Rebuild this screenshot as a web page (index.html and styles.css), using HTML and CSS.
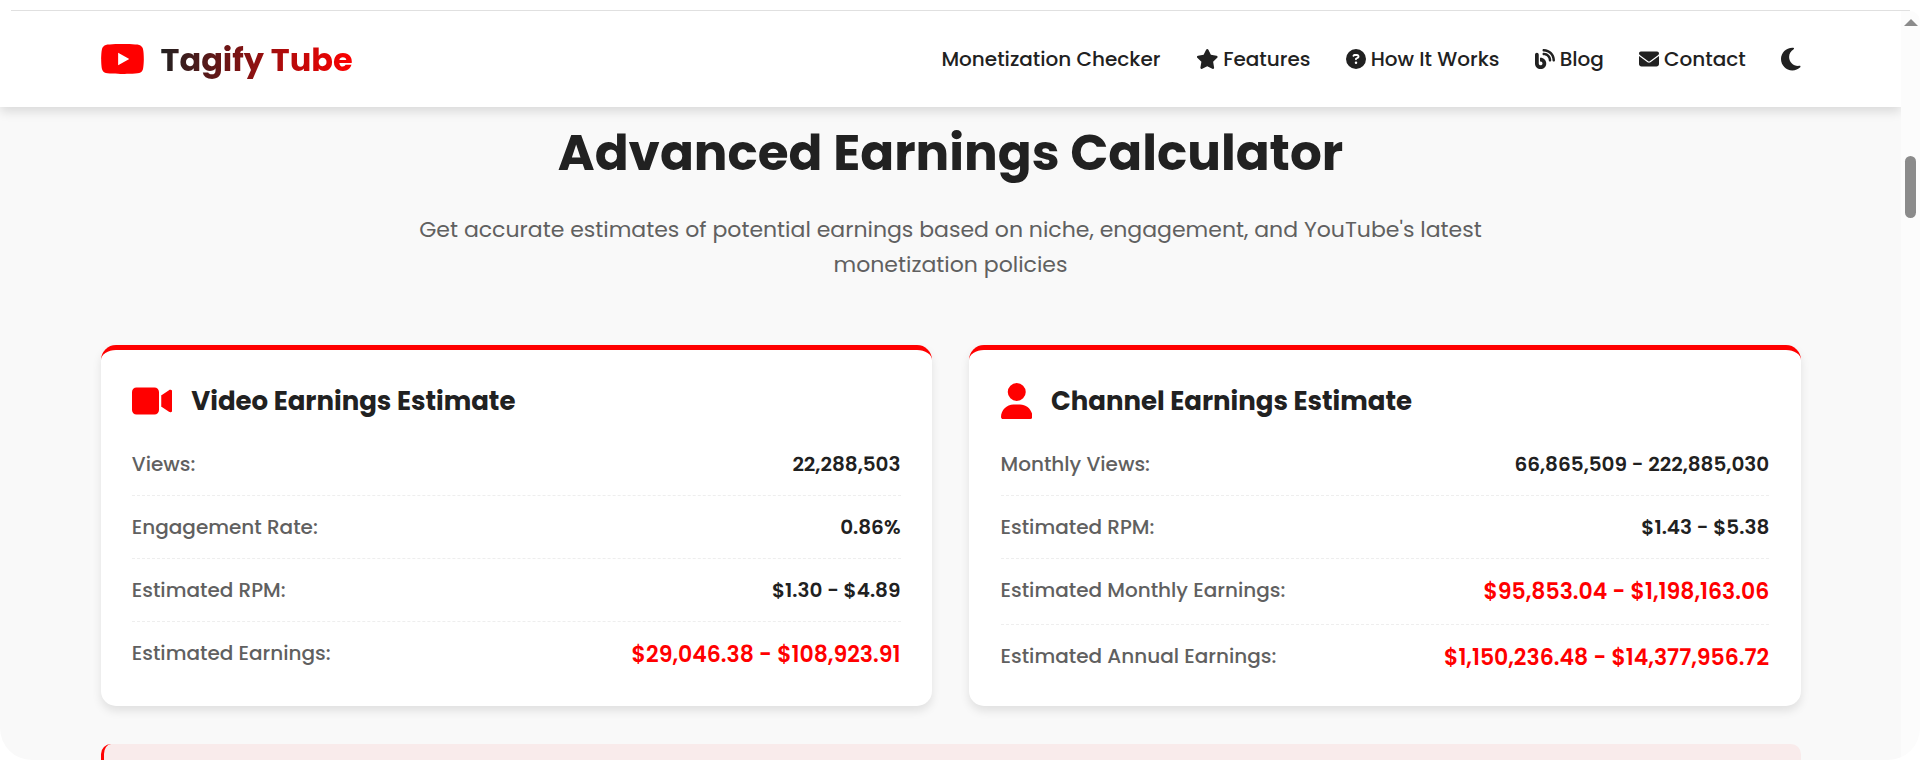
FILE: index.html
```html
<!DOCTYPE html>
<html lang="en">
<head>
    <meta charset="UTF-8">
    <meta name="viewport" content="width=device-width, initial-scale=1.0">
    <title>Tagify Tube</title>
    <link rel="stylesheet" href="styles.css">
</head>
<body>
    <div class="top-line"></div>
    <div class="window">
        <div class="page">
            <header>
                <a href="#" class="logo">
                    <svg class="logo-icon" viewBox="0 0 576 512"><path d="M549.655 124.083c-6.281-23.65-24.787-42.276-48.284-48.597C458.781 64 288 64 288 64S117.22 64 74.629 75.486c-23.497 6.322-42.003 24.947-48.284 48.597-11.412 42.867-11.412 132.305-11.412 132.305s0 89.438 11.412 132.305c6.281 23.65 24.787 41.5 48.284 47.821C117.22 448 288 448 288 448s170.78 0 213.371-11.486c23.497-6.321 42.003-24.171 48.284-47.821 11.412-42.867 11.412-132.305 11.412-132.305s0-89.438-11.412-132.305zm-317.51 213.508V175.185l142.739 81.205-142.739 81.201z"/></svg>
                    <span class="logo-text">Tagify Tube</span>
                </a>

                <!-- Navigation Bar -->
                <nav>
                    <ul>
                        <li><a href="#">Monetization Checker</a></li>
                        <li><a href="#"><svg class="star" viewBox="0 0 576 512"><path d="M316.9 18C311.6 7 300.4 0 288.1 0s-23.4 7-28.8 18L195 150.3 51.4 171.5c-12 1.8-22 10.2-25.7 21.7s-.7 24.2 7.9 32.7L137.8 329 113.2 474.7c-2 12 3 24.2 12.9 31.3s23 8 33.8 2.3l128.3-68.5 128.3 68.5c10.8 5.7 23.9 4.9 33.8-2.3s14.9-19.3 12.9-31.3L438.5 329 542.7 225.9c8.6-8.5 11.7-21.2 7.9-32.7s-13.7-19.9-25.7-21.7L381.2 150.3 316.9 18z"/></svg>Features</a></li>
                        <li><a href="#"><svg viewBox="0 0 512 512"><path d="M256 512A256 256 0 1 0 256 0a256 256 0 1 0 0 512zM169.8 165.3c7.9-22.3 29.1-37.3 52.8-37.3h58.3c34.9 0 63.1 28.3 63.1 63.1c0 22.6-12.1 43.5-31.7 54.8L280 264.4c-.2 13-10.9 23.6-24 23.6c-13.3 0-24-10.7-24-24V250.5c0-8.6 4.6-16.5 12.1-20.8l44.3-25.4c4.7-2.7 7.6-7.7 7.6-13.1c0-8.4-6.8-15.1-15.1-15.1H222.6c-3.4 0-6.4 2.1-7.5 5.3l-.4 1.2c-4.4 12.5-18.2 19-30.6 14.6s-19-18.2-14.6-30.6l.4-1.2zM224 352a32 32 0 1 1 64 0 32 32 0 1 1 -64 0z"/></svg>How It Works</a></li>
                        <li><a href="#"><svg viewBox="0 0 512 512"><path d="M192 32c0 17.7 14.3 32 32 32c123.7 0 224 100.3 224 224c0 17.7 14.3 32 32 32s32-14.3 32-32C512 128.9 383.1 0 224 0c-17.7 0-32 14.3-32 32zm0 96c0 17.7 14.3 32 32 32c70.7 0 128 57.3 128 128c0 17.7 14.3 32 32 32s32-14.3 32-32c0-106-86-192-192-192c-17.7 0-32 14.3-32 32zM96 144c0-26.5-21.5-48-48-48S0 117.5 0 144V368c0 79.5 64.5 144 144 144s144-64.5 144-144s-64.5-144-144-144H128v96h16c26.5 0 48 21.5 48 48s-21.5 48-48 48s-48-21.5-48-48V144z"/></svg>Blog</a></li>
                        <li><a href="#"><svg viewBox="0 0 512 512"><path d="M48 64C21.5 64 0 85.5 0 112c0 15.1 7.1 29.3 19.2 38.4L236.8 313.6c11.4 8.5 27 8.5 38.4 0L492.8 150.4c12.1-9.1 19.2-23.3 19.2-38.4c0-26.5-21.5-48-48-48H48zM0 176V384c0 35.3 28.7 64 64 64H448c35.3 0 64-28.7 64-64V176L294.4 339.2c-22.8 17.1-54 17.1-76.8 0L0 176z"/></svg>Contact</a></li>
                        <li><a href="#"><svg class="moon" viewBox="0 0 384 512"><path d="M223.5 32C100 32 0 132.3 0 256S100 480 223.5 480c60.6 0 115.5-24.2 155.8-63.4c5-4.9 6.3-12.5 3.1-18.7s-10.1-9.7-17-8.5c-9.8 1.7-19.8 2.6-30.1 2.6c-96.9 0-175.5-78.8-175.5-176c0-65.8 36-123.1 89.3-153.3c6.1-3.5 9.2-10.5 7.7-17.3s-7.3-11.9-14.3-12.5c-6.3-.5-12.6-.8-19-.8z"/></svg></a></li>
                    </ul>
                </nav>
            </header>

            <main>
                <h1>Advanced Earnings Calculator</h1>
                <p class="subtitle">Get accurate estimates of potential earnings based on niche, engagement, and YouTube's latest monetization policies</p>

                <div class="cards">
                    <!-- Video card -->
                    <div class="card">
                        <h3>
                            <svg class="icon-video" viewBox="0 0 576 512"><path d="M0 128C0 92.7 28.7 64 64 64H320c35.3 0 64 28.7 64 64V384c0 35.3-28.7 64-64 64H64c-35.3 0-64-28.7-64-64V128zM559.1 99.8c10.4 5.6 16.9 16.4 16.9 28.2V384c0 11.8-6.5 22.6-16.9 28.2s-23 5-32.9-1.6l-96-64L416 337.1V320 192 174.9l14.2-9.5 96-64c9.8-6.5 22.4-7.2 32.9-1.6z"/></svg>
                            Video Earnings Estimate
                        </h3>
                        <div class="row"><span class="label">Views:</span><span class="value">22,288,503</span></div>
                        <div class="row"><span class="label">Engagement Rate:</span><span class="value">0.86%</span></div>
                        <div class="row"><span class="label">Estimated RPM:</span><span class="value">$1.30 - $4.89</span></div>
                        <div class="row"><span class="label">Estimated Earnings:</span><span class="value earnings">$29,046.38 - $108,923.91</span></div>
                    </div>

                    <!-- Channel card -->
                    <div class="card">
                        <h3>
                            <svg class="icon-user" viewBox="0 0 448 512"><path d="M224 256A128 128 0 1 0 224 0a128 128 0 1 0 0 256zm-45.7 48C79.8 304 0 383.8 0 482.3C0 498.7 13.3 512 29.7 512H418.3c16.4 0 29.7-13.3 29.7-29.7C448 383.8 368.2 304 269.7 304H178.3z"/></svg>
                            Channel Earnings Estimate
                        </h3>
                        <div class="row"><span class="label">Monthly Views:</span><span class="value">66,865,509 - 222,885,030</span></div>
                        <div class="row"><span class="label">Estimated RPM:</span><span class="value">$1.43 - $5.38</span></div>
                        <div class="row"><span class="label">Estimated Monthly Earnings:</span><span class="value earnings">$95,853.04 - $1,198,163.06</span></div>
                        <div class="row"><span class="label">Estimated Annual Earnings:</span><span class="value earnings">$1,150,236.48 - $14,377,956.72</span></div>
                    </div>
                </div>

                <div class="notice"></div>
            </main>
        </div>

        <div class="scrollbar">
            <div class="arrow"></div>
            <div class="thumb"></div>
        </div>
    </div>
</body>
</html>
```
FILE: styles.css
```css
* {
    margin: 0;
    padding: 0;
    box-sizing: border-box;
}

body {
    font-family: 'Poppins', 'Inter', sans-serif;
    background: #fff;
    color: #212121;
    height: 760px;
    overflow: hidden;
}

.top-line {
    height: 1px;
    margin: 10px 10px 0 11px;
    background: #e0e0e0;
}

.window {
    display: flex;
    height: 749px;
    border-radius: 0 10px 32px 32px;
    overflow: hidden;
}

.page {
    width: 1901px;
    background: #f9f9f9;
    overflow: hidden;
}

/* Header styling */
header {
    display: flex;
    justify-content: space-between;
    align-items: center;
    height: 96px;
    padding: 0 100.5px 0 100px;
    background: #fff;
    box-shadow: 0 5px 10px rgba(0, 0, 0, 0.12);
}

.logo {
    display: flex;
    align-items: center;
    gap: 15.5px;
    text-decoration: none;
}

.logo-icon {
    width: 45px;
    height: 40px;
    fill: #ff0000;
}

.logo-text {
    padding-top: 2px;
    font-size: 32px;
    font-weight: 700;
    line-height: 50px;
    background: linear-gradient(to right, #212121, #ff0000);
    -webkit-background-clip: text;
    background-clip: text;
    color: transparent;
}

nav ul {
    list-style: none;
    display: flex;
    align-items: center;
    gap: 35.25px;
}

nav a {
    display: flex;
    align-items: center;
    gap: 5px;
    color: #212121;
    text-decoration: none;
    font-size: 20px;
    font-weight: 500;
    line-height: 32px;
    white-space: nowrap;
}

nav svg {
    width: 20px;
    height: 20px;
    fill: #212121;
}

nav .star {
    width: 22.5px;
}

nav .moon {
    width: 19.5px;
    height: 26px;
}

main {
    padding: 15.5px 100.5px 0;
}

h1 {
    font-size: 50px;
    font-weight: 700;
    line-height: 60px;
    text-align: center;
}

.subtitle {
    max-width: 1100px;
    margin: 29.5px auto 62.7px;
    color: #606060;
    font-size: 22px;
    line-height: 35.2px;
    text-align: center;
}

.cards {
    display: grid;
    grid-template-columns: 1fr 1fr;
    gap: 37.5px;
}

.card {
    height: 361px;
    padding: 31.25px;
    background: #fff;
    border-top: 5px solid #ff0000;
    border-radius: 15px;
    box-shadow: 0 5px 10px rgba(0, 0, 0, 0.1);
}

.card h3 {
    display: flex;
    align-items: center;
    gap: 19px;
    margin-bottom: 27px;
    font-size: 26px;
    font-weight: 700;
    line-height: 40px;
}

.card h3 svg {
    height: 36px;
    fill: #ff0000;
}

.icon-video {
    width: 40.5px;
}

.icon-user {
    width: 31.5px;
}

.row {
    display: flex;
    justify-content: space-between;
    align-items: flex-start;
    padding-bottom: 15px;
    margin-bottom: 15px;
    border-bottom: 1px dashed #eee;
    font-size: 20px;
    line-height: 32px;
}

.row:last-child {
    padding-bottom: 0;
    margin-bottom: 0;
    border-bottom: none;
}

.label {
    color: #606060;
    font-weight: 500;
}

.value {
    font-weight: 600;
}

.earnings {
    color: #ff0000;
    font-size: 22px;
    line-height: 35px;
}

.notice {
    height: 100px;
    margin-top: 38px;
    background: #f9ebeb;
    border-left: 3px solid #ff0000;
    border-radius: 10px;
}

/* Scrollbar */
.scrollbar {
    display: flex;
    flex-direction: column;
    align-items: center;
    width: 19px;
    padding-top: 8px;
    background: #fcfcfc;
}

.arrow {
    border-left: 7px solid transparent;
    border-right: 7px solid transparent;
    border-bottom: 7px solid #8b8b8b;
}

.thumb {
    width: 11px;
    height: 62px;
    margin-top: 130px;
    background: #8b8b8b;
    border-radius: 6px;
}
```
